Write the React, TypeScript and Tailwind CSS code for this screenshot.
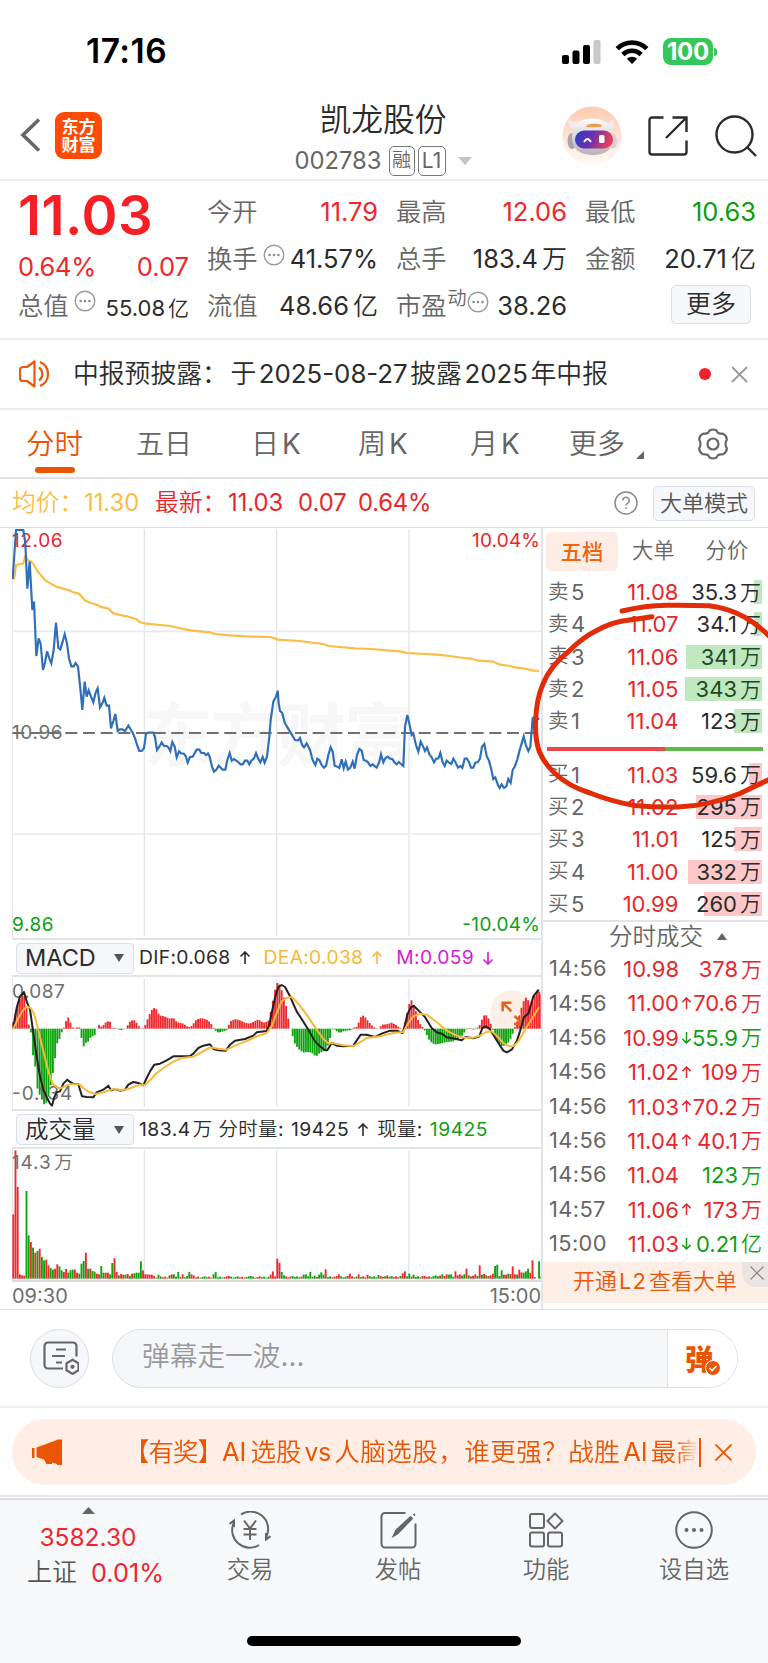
import React from "react";

type Pt = [number, number];

const PRICE: Pt[] = [[38,207],[48,60],[70,60],[76,100],[82,236],[89,155],[97,300],[102,275],[109,438],[116,385],[122,402],[129,480],[135,458],[141,424],[148,445],[154,460],[161,420],[168,338],[175,413],[181,418],[188,395],[194,373],[201,400],[207,445],[214,469],[221,469],[227,459],[234,470],[241,535],[247,600],[254,515],[260,560],[266,541],[273,560],[280,577],[287,548],[293,535],[300,592],[307,580],[313,563],[320,587],[327,587],[333,655],[340,633],[346,612],[353,663],[360,658],[367,658],[375,663],[385,647],[398,668],[405,685],[412,707],[418,723],[425,723],[432,715],[438,672],[445,668],[460,668],[465,682],[471,720],[478,710],[485,697],[492,708],[500,708],[505,712],[511,724],[517,696],[524,710],[530,742],[537,724],[543,730],[552,731],[558,740],[563,758],[570,741],[578,740],[590,719],[598,719],[604,729],[612,729],[618,735],[624,730],[629,740],[636,770],[642,785],[650,778],[656,767],[663,774],[668,779],[676,779],[682,750],[689,729],[695,752],[702,747],[712,754],[722,763],[728,763],[735,752],[742,752],[748,763],[754,752],[762,745],[768,729],[774,745],[781,757],[788,741],[794,758],[801,740],[808,680],[812,630],[820,575],[828,560],[833,542],[836,580],[840,603],[846,608],[855,640],[870,665],[885,690],[895,691],[900,684],[906,704],[912,712],[920,700],[930,720],[938,750],[946,765],[952,746],[958,750],[965,765],[972,773],[978,768],[985,735],[992,712],[998,725],[1004,767],[1012,770],[1018,774],[1025,748],[1031,775],[1037,755],[1044,779],[1051,773],[1058,755],[1064,776],[1071,735],[1078,717],[1085,722],[1091,750],[1098,752],[1104,757],[1111,768],[1118,763],[1125,769],[1130,773],[1137,758],[1143,733],[1150,757],[1156,745],[1163,740],[1170,746],[1177,747],[1183,757],[1190,763],[1196,756],[1203,762],[1210,768],[1215,650],[1222,615],[1229,645],[1235,675],[1240,670],[1248,705],[1255,725],[1262,695],[1268,707],[1275,723],[1281,712],[1288,733],[1295,742],[1302,757],[1308,747],[1315,745],[1321,729],[1328,757],[1334,768],[1340,752],[1346,757],[1354,762],[1360,746],[1366,756],[1374,773],[1381,768],[1387,774],[1394,746],[1400,745],[1407,756],[1413,773],[1420,773],[1426,758],[1433,757],[1440,746],[1446,710],[1453,702],[1460,738],[1467,752],[1473,775],[1480,807],[1486,802],[1493,823],[1499,834],[1505,823],[1512,834],[1519,829],[1525,807],[1532,818],[1538,780],[1545,768],[1552,748],[1558,724],[1565,700],[1571,679],[1578,707],[1585,723],[1591,710],[1598,625],[1605,620],[1618,628]];
const AVG: Pt[] = [[38,207],[43,205],[48,165],[70,160],[76,138],[83,150],[92,154],[100,162],[115,187],[137,212],[168,230],[205,240],[220,247],[235,250],[243,257],[253,270],[270,278],[295,286],[300,290],[325,296],[340,310],[365,316],[385,320],[410,328],[418,336],[432,340],[510,348],[570,361],[630,367],[645,372],[690,376],[740,379],[810,381],[822,384],[832,389],[900,393],[945,399],[970,402],[985,408],[1065,415],[1115,417],[1205,425],[1220,429],[1310,434],[1350,438],[1390,444],[1415,446],[1435,452],[1480,455],[1500,464],[1530,468],[1545,472],[1580,477],[1600,482],[1617,483]];
const DIF: Pt[] = [[40,292],[50,235],[60,200],[72,187],[80,215],[90,240],[100,310],[110,380],[120,440],[130,480],[140,502],[150,522],[156,528],[162,505],[170,488],[180,485],[190,462],[202,450],[210,457],[220,462],[235,463],[240,480],[246,500],[260,502],[280,503],[290,488],[310,480],[325,468],[333,482],[345,478],[360,483],[375,480],[385,465],[400,457],[415,460],[430,467],[440,445],[450,425],[463,405],[480,402],[500,392],[520,380],[540,380],[570,379],[580,372],[595,355],[610,348],[630,344],[640,358],[655,362],[678,363],[690,345],[705,333],[735,328],[760,318],[770,308],[800,304],[808,285],[815,250],[825,205],[835,172],[845,166],[855,172],[870,200],[890,245],[905,268],[925,300],[945,335],[960,350],[975,362],[982,362],[995,340],[1010,348],[1030,350],[1060,348],[1072,330],[1082,315],[1100,315],[1125,322],[1145,312],[1170,303],[1190,303],[1208,310],[1215,285],[1222,255],[1232,233],[1242,229],[1255,242],[1275,262],[1295,295],[1310,308],[1325,312],[1340,323],[1365,327],[1385,332],[1397,322],[1420,326],[1438,320],[1447,295],[1458,290],[1468,297],[1480,315],[1495,340],[1510,363],[1520,368],[1535,360],[1550,335],[1560,305],[1572,262],[1585,252],[1600,200],[1616,180]];
const DEA: Pt[] = [[40,297],[55,265],[70,240],[82,231],[92,235],[102,252],[115,300],[130,365],[145,425],[158,462],[170,472],[180,476],[195,470],[210,464],[238,464],[250,475],[265,486],[285,493],[305,490],[325,483],[345,477],[362,482],[385,478],[405,470],[420,465],[435,466],[450,452],[470,430],[490,415],[520,396],[545,385],[580,381],[600,370],[630,353],[655,357],[680,360],[700,350],[720,342],[745,332],[770,320],[800,310],[815,290],[830,250],[845,215],[858,205],[875,202],[895,222],[920,255],[950,300],[970,328],[985,341],[1000,341],[1030,347],[1060,349],[1085,335],[1100,325],[1140,320],[1180,310],[1210,307],[1225,280],[1240,260],[1260,252],[1280,255],[1310,277],[1340,303],[1370,318],[1390,324],[1420,324],[1440,318],[1458,307],[1475,305],[1490,318],[1510,340],[1525,349],[1540,350],[1555,335],[1575,300],[1595,268],[1617,233]];
const HIST: Pt[] = [[37,3],[40,20],[55,80],[70,108],[78,80],[85,15],[92,0],[97,-70],[105,-103],[112,-178],[120,-200],[133,-228],[143,-218],[153,-165],[163,-110],[170,-48],[180,-28],[187,-5],[193,5],[200,28],[204,36],[211,20],[217,5],[222,0],[230,4],[238,4],[242,-15],[250,-55],[258,-42],[266,-38],[270,-28],[284,-20],[292,3],[297,12],[303,5],[310,10],[320,22],[330,22],[335,3],[340,0],[345,4],[352,0],[360,-5],[368,-3],[375,0],[380,2],[386,18],[395,25],[403,25],[412,15],[418,4],[425,0],[432,2],[438,15],[445,35],[455,56],[462,62],[470,58],[478,40],[490,38],[510,30],[520,33],[530,20],[550,15],[565,4],[575,8],[590,28],[605,32],[620,27],[632,18],[640,3],[645,-5],[655,-12],[670,-8],[682,-4],[685,8],[692,22],[705,29],[720,25],[735,18],[750,15],[760,20],[775,28],[790,18],[805,22],[812,50],[820,90],[826,120],[834,143],[842,125],[850,100],[858,70],[864,35],[870,5],[875,-12],[885,-45],[895,-60],[910,-72],[920,-70],[935,-72],[948,-84],[960,-72],[970,-68],[980,-60],[988,-40],[995,-5],[1000,3],[1005,-5],[1020,-13],[1030,-8],[1045,-5],[1055,-4],[1060,3],[1072,5],[1080,30],[1087,41],[1095,35],[1105,22],[1115,10],[1125,2],[1138,0],[1145,12],[1160,13],[1175,18],[1190,10],[1200,2],[1210,0],[1215,20],[1222,50],[1232,90],[1240,75],[1248,52],[1256,20],[1265,8],[1272,0],[1277,-12],[1290,-38],[1305,-48],[1320,-45],[1340,-40],[1360,-38],[1375,-30],[1388,-20],[1398,-3],[1405,2],[1415,1],[1422,-4],[1430,0],[1440,12],[1450,38],[1457,43],[1466,30],[1475,8],[1481,-10],[1490,-38],[1505,-52],[1520,-50],[1535,-25],[1543,0],[1550,18],[1560,45],[1567,72],[1576,95],[1585,85],[1592,68],[1600,90],[1610,110],[1617,112],[1624,103]];
/* positive = rising minute, negative = falling minute */
const VOL_HEAD = [193,385,275,13,10,9,-263,-130,110,-93,78,-83,90,-65,-55,57,40,-32,-27,30,43,-37,-25,20,29,-18,-25,-27,27,18,-15,-45,-53,78,-30,30,-23,-21,15,13,-38,-18,18,18,-13,-47,61,20,-10,14,12,-12,14,-9,15,-16];
const VOL_SPIKES: Pt[] = [[408,-18],[415,-18],[421,-52],[428,25],[434,13],[441,13],[447,12],[454,12],[460,8],[475,-12],[510,-10],[518,13],[525,-13],[532,-20],[545,-9],[550,13],[559,-8],[566,-20],[572,13],[579,10],[638,-13],[645,-20],[685,8],[750,-8],[815,12],[822,22],[830,60],[836,48],[843,-20],[850,-10],[908,-12],[915,-13],[928,-10],[934,-20],[941,-9],[960,-12],[967,-19],[973,-12],[980,28],[1014,13],[1053,15],[1073,13],[1100,12],[1135,-11],[1160,10],[1200,-8],[1211,16],[1218,22],[1225,16],[1231,-15],[1238,-12],[1270,8],[1325,-13],[1338,13],[1344,-12],[1351,-13],[1364,22],[1377,13],[1390,-13],[1397,30],[1423,13],[1436,40],[1443,-15],[1449,-12],[1455,14],[1462,-10],[1482,15],[1488,-38],[1495,-42],[1502,-27],[1508,-25],[1515,12],[1521,12],[1528,-15],[1534,14],[1541,37],[1548,13],[1554,-12],[1561,27],[1567,19],[1574,-18],[1581,-22],[1587,-30],[1594,18],[1600,55],[1607,5],[1614,0],[1620,-52]];

const COUNT = 241;
const STEP = 6.6;

const FONT = "Inter, 'Noto Sans CJK SC DemiLight', 'Noto Sans CJK SC Light', 'Noto Sans CJK SC', sans-serif";
const BOLD_FONT = "'Noto Sans CJK SC', sans-serif";

function sample(points: Pt[], x: number) {
  for (let i = 1; i < points.length; i++) {
    const [x0, y0] = points[i - 1];
    const [x1, y1] = points[i];
    if (x <= x1) return y0 + ((y1 - y0) * (x - x0)) / (x1 - x0);
  }
  return points[points.length - 1][1];
}
const toPath = (points: Pt[]) => points.map(([x, y]) => `${x},${y}`).join(" ");

const volumes: number[] = Array.from({ length: COUNT }, (_, i) => {
  if (i < VOL_HEAD.length) return VOL_HEAD[i];
  const base = i > 190 ? 8 : i > 115 ? 6 : 5;
  const h = base + ((i * 7) % 5) - 2;
  return (i * 13) % 7 < 3 ? h : -h;
});
VOL_SPIKES.forEach(([x, h]) => {
  volumes[Math.min(COUNT - 1, Math.round((x - 40) / STEP))] = h;
});

const bars = Array.from({ length: COUNT }, (_, i) => i);

function Grid({ top, bottom }: { top: number; bottom: number }) {
  return (
    <g stroke="#e2e4ec" strokeWidth="4">
      {[433, 830, 1227].map((x) => (
        <line key={x} x1={x} x2={x} y1={top} y2={bottom} />
      ))}
    </g>
  );
}

function PriceChart() {
  return (
    <svg viewBox="36 54 1587 1230" className="block h-[410px] w-[529px] shrink-0" fontFamily={FONT}>
      <text x="430" y="754" fontSize="208" fontWeight="700" fill="#f7f7f8" textLength="810" fontFamily={BOLD_FONT}>东方财富</text>
      <Grid top={58} bottom={1278} />
      <g stroke="#e8eaf0" strokeWidth="5">
        <line x1="37" x2="1623" y1="364" y2="364" />
        <line x1="37" x2="1623" y1="972" y2="972" />
      </g>
      <line x1="37" x2="37" y1="54" y2="1284" stroke="#dfe1e8" strokeWidth="3" />
      <line x1="37" x2="1615" y1="669" y2="669" stroke="#707070" strokeWidth="6.5" strokeDasharray="36 17" />
      <g fontSize="57">
        <text x="36" y="110" fill="#e8262b" textLength="152">12.06</text>
        <text x="1620" y="110" fill="#e8262b" textAnchor="end" textLength="204">10.04%</text>
        <text x="36" y="688" fill="#6e6e6e" textLength="152">10.96</text>
        <text x="36" y="1262" fill="#109e14" textLength="125">9.86</text>
        <text x="1620" y="1262" fill="#109e14" textAnchor="end" textLength="233">-10.04%</text>
      </g>
      <polyline points={toPath(AVG)} fill="none" stroke="#f9be45" strokeWidth="6.500" strokeLinejoin="round" />
      <polyline points={toPath(PRICE)} fill="none" stroke="#2f6fba" strokeWidth="6.500" strokeLinejoin="miter" />
    </svg>
  );
}

function MacdChart() {
  return (
    <svg viewBox="36 142 1587 396" className="block h-[132px] w-[529px] shrink-0" fontFamily={FONT}>
      <Grid top={148} bottom={531} />
      <line x1="37" x2="37" y1="142" y2="538" stroke="#dfe1e8" strokeWidth="3" />
      <circle cx="1537" cy="248" r="66" fill="#fdeee6" />
      {bars.map((i) => {
        const h = sample(HIST, 40 + i * STEP);
        return <rect key={i} x={37 + i * STEP} y={h > 0 ? 297 - h : 297} width="5.7" height={Math.abs(h)} fill={h > 0 ? "#f02a2c" : "#0fa30f"} />;
      })}
      <g fontSize="57" fill="#6e6e6e">
        <text x="36" y="205" textLength="158">0.087</text>
        <text x="36" y="512" textLength="181">-0.134</text>
      </g>
      <g fill="none" stroke="#e8611a" strokeWidth="7.5">
        <path d="M1508 245V219h26M1508 219l26 26M1568 283h-26M1568 283v-28M1568 283l-24-24" />
      </g>
      <polyline points={toPath(DIF)} fill="none" stroke="#222" strokeWidth="6" strokeLinejoin="round" />
      <polyline points={toPath(DEA)} fill="none" stroke="#f9b938" strokeWidth="6" strokeLinejoin="round" />
    </svg>
  );
}

function VolumeChart() {
  return (
    <svg viewBox="36 656 1587 393" className="block h-[131px] w-[529px] shrink-0" fontFamily={FONT}>
      <Grid top={660} bottom={1045} />
      <line x1="37" x2="37" y1="656" y2="1049" stroke="#dfe1e8" strokeWidth="3" />
      {bars.map((i) => (
        <rect key={i} x={37 + i * STEP} y={1045 - Math.abs(volumes[i])} width="5.7" height={Math.abs(volumes[i])} fill={volumes[i] > 0 ? "#f02a2c" : "#0fa30f"} />
      ))}
      <text x="36" y="717" fontSize="57" fill="#6e6e6e" textLength="116">14.3</text>
      <text x="163" y="717" fontSize="56" fill="#6e6e6e">万</text>
    </svg>
  );
}

function Dots() {
  return (
    <svg viewBox="0 0 22 22" className="h-[22px] w-[22px] shrink-0">
      <circle cx="11" cy="11" r="9.8" fill="none" stroke="#9a9a9a" strokeWidth="1.4" />
      <g fill="#8a8a8a">
        <circle cx="6.6" cy="11" r="1.3" /><circle cx="11" cy="11" r="1.3" /><circle cx="15.4" cy="11" r="1.3" />
      </g>
    </svg>
  );
}

function Cell({ label, value, unit, color = "text-[#2b2b2b]", extra }: { label: string; value: string; unit?: string; color?: string; extra?: React.ReactNode }) {
  return (
    <div className="flex h-[47px] items-center">
      <span className="text-[25.3px] text-[#666]">{label}</span>
      {extra}
      <span className={`ml-auto flex items-center text-[25.5px] ${color}`}>
        {value}
        {unit && <span className="ml-[4px] text-[25px]">{unit}</span>}
      </span>
    </div>
  );
}

function StatusBar() {
  return (
    <div className="flex h-[85px] items-center pt-[18px] pl-[86px] pr-[51px]">
      <span className="pt-[1px] text-[33.500px] font-semibold tracking-[0.500px] text-black">17:16</span>
      <div className="ml-auto flex items-center">
        <svg viewBox="0 0 39 24" className="h-6 w-[39px]">
          <rect x="0" y="15" width="7" height="9" rx="2" /><rect x="10.5" y="10.5" width="7" height="13.5" rx="2" /><rect x="21" y="5" width="7" height="19" rx="2" /><rect x="31.500" y="0" width="7" height="24" rx="2" fill="#c8c8c8" />
        </svg>
        <svg viewBox="0 0 34 24" className="ml-[14px] h-6 w-[34px]">
          <g fill="none" stroke="#000" strokeWidth="4.6">
            <path d="M2.200 8.700C10.400.6 23.600.6 31.800 8.700" /><path d="M7.800 14.500C13.100 9.500 20.900 9.500 26.200 14.500" />
          </g>
          <path d="M11.800 18.800C14.900 16 19.100 16 22.200 18.800L17 24Z" />
        </svg>
        <span className="ml-[14px] flex h-[27px] w-[50px] items-center justify-center rounded-[8px] bg-[#34c759] text-[24px] font-bold tracking-[-0.2px] text-white">100</span>
        <span className="ml-[1px] h-2 w-[3px] rounded-r-full bg-[#34c759]" />
      </div>
    </div>
  );
}

function Robot() {
  return (
    <svg viewBox="0 0 60 60" className="h-[60px] w-[60px]">
      <defs>
        <linearGradient id="halo" x1="0" y1="0" x2="0" y2="1"><stop offset="0" stopColor="#fdcbb0" /><stop offset="1" stopColor="#fffaf7" /></linearGradient>
        <linearGradient id="visor" x1="0" y1="0" x2="1" y2="0.200"><stop offset="0" stopColor="#2b3fc4" /><stop offset="0.5" stopColor="#6a2fb0" /><stop offset="1" stopColor="#e8405c" /></linearGradient>
        <linearGradient id="shell" x1="0" y1="0" x2="0" y2="1"><stop offset="0" stopColor="#fdfcfc" /><stop offset="1" stopColor="#b9b1b7" /></linearGradient>
      </defs>
      <circle cx="30" cy="30" r="29.500" fill="url(#halo)" />
      <path d="M7 12c2 4 5 4 9 3l-4 8C7 21 5 16 7 12ZM50 13c-1 3-3 4-6 3l2 8c6-1 8-7 4-11Z" fill="#efebec" />
      <ellipse cx="10" cy="35" rx="4.500" ry="8" fill="#aaa3a9" /><ellipse cx="51" cy="35" rx="4" ry="7.500" fill="#d7d0d4" />
      <path d="M10 32C10 19 17 12.500 30 12.500S50 19 51 32c0 12-8 17-20 17S10 44 10 32Z" fill="url(#shell)" />
      <path d="M25 19q7-2.500 15 0l-1 2H24Z" fill="#f09a4c" />
      <rect x="13" y="24.500" width="38" height="18" rx="9" fill="url(#visor)" />
      <path d="M22 36q3.500-6 7 0" fill="none" stroke="#fff" strokeWidth="1.800" />
      <rect x="37" y="29" width="5.500" height="8" rx="1.500" fill="#fff" />
    </svg>
  );
}

function Header() {
  return (
    <header className="flex h-[96px] border-b-2 border-[#ebebed]">
      <div className="flex w-[228px] items-center pt-[6px] pl-5">
        <svg viewBox="0 0 22 36" className="h-9 w-[22px]"><path d="M19 2.500 3 18l16 15.500" fill="none" stroke="#666" strokeWidth="3.600" /></svg>
        <div className="ml-[13px] flex h-[47px] w-[47px] flex-col items-center justify-center rounded-[9px] bg-[#fd4a05] text-[17px] leading-[18.500px] font-bold text-white" style={{ fontFamily: BOLD_FONT }}>
          <span>东方</span><span>财富</span>
        </div>
      </div>
      <div className="flex w-[310px] flex-col items-center">
        <h1 className="mt-[19px] text-[31.800px] leading-[32px] text-[#2b2b2b]">凯龙股份</h1>
        <div className="mt-[9px] flex h-[31px] items-center">
          <span className="text-[23.800px] text-[#666]">002783</span>
          <span className="ml-[7px] flex h-[30px] w-[26px] items-center justify-center rounded-[5px] border-[1.500px] border-[#777] text-[19px] text-[#666]">融</span>
          <span className="ml-[3px] flex h-[30px] w-[28px] items-center justify-center rounded-[5px] border-[1.500px] border-[#777] text-[21px] text-[#666]">L1</span>
          <svg viewBox="0 0 14 8" className="ml-[12px] h-2 w-[14px]"><path d="M0 0h14L7 8Z" fill="#c4c4c4" /></svg>
        </div>
      </div>
      <div className="flex flex-1 items-center pt-[7px] pl-[24px]">
        <Robot />
        <svg viewBox="0 0 40 40" className="ml-[26px] h-10 w-10" fill="none" stroke="#2b2b2b" strokeWidth="2.400">
          <path d="M15.500 1.500H4A2.500 2.500 0 0 0 1.500 4v32A2.500 2.500 0 0 0 4 38.500h32a2.500 2.500 0 0 0 2.500-2.500V24.500M24.500 1.500h14V16M38.500 1.500 18 22" />
        </svg>
        <svg viewBox="0 0 42 42" className="ml-[27px] h-[42px] w-[42px]" fill="none" stroke="#2b2b2b" strokeWidth="2.400">
          <circle cx="19.500" cy="19.500" r="18" /><path d="m32 32 9 9" />
        </svg>
      </div>
    </header>
  );
}

function Quote() {
  const red = "text-[#f0262b]";
  return (
    <section className="grid h-[159px] grid-cols-[171px_171px_171px_171px] gap-x-[18px] border-b-2 border-[#ebebed] pt-[7.500px] pl-[18px]">
      <div className={red}>
        <div className="flex h-[53px] items-center pt-[1px] text-[54.500px] font-semibold tracking-[0.500px] text-[#f81f24]">11.03</div>
        <div className="flex h-[51px] items-center justify-between text-[25.500px]"><span className="tracking-[-0.300px]">0.64%</span><span>0.07</span></div>
        <div className="flex h-[26px] items-center text-[25.300px] text-[#666]">
          总值
          <span className="mb-[9px] ml-[5px] flex"><Dots /></span>
          <span className="mt-[5px] ml-auto flex items-center text-[22px] text-[#2b2b2b]">55.08<span className="ml-[3px] text-[21px]">亿</span></span>
        </div>
      </div>
      <div>
        <Cell label="今开" value="11.79" color={red} />
        <Cell label="换手" value="41.57%" extra={<span className="mb-[9px] ml-[5px] flex"><Dots /></span>} />
        <Cell label="流值" value="48.66" unit="亿" />
      </div>
      <div>
        <Cell label="最高" value="12.06" color={red} />
        <Cell label="总手" value="183.4" unit="万" />
        <Cell label="市盈" value="38.26" extra={<><span className="mb-[15px] ml-[1px] text-[19px] text-[#666]">动</span><span className="mb-[9px] flex"><Dots /></span></>} />
      </div>
      <div>
        <Cell label="最低" value="10.63" color="text-[#0c9c0c]" />
        <Cell label="金额" value="20.71" unit="亿" />
        <div className="mt-[2px] ml-[86px] flex h-[39px] w-[80px] items-center justify-center rounded-[5px] border-[1.500px] border-[#dcdee5] bg-[#f6f7fa] pt-[1px] text-[25px] text-[#2b2b2b]">更多</div>
      </div>
    </section>
  );
}

function News() {
  return (
    <section className="flex h-[70px] items-center border-b-2 border-[#ebebed] pl-[19px]">
      <svg viewBox="0 0 34 28" className="h-7 w-[34px]" fill="none" stroke="#e8590c" strokeWidth="2.200">
        <path d="M15.500 1.500v25L8 21H4a3 3 0 0 1-3-3v-8a3 3 0 0 1 3-3h4ZM20 7.500a8 8 0 0 1 0 13M21 2a13 13 0 0 1 0 24" strokeLinejoin="round" />
      </svg>
      <div className="ml-[20px] flex w-[535px] justify-between whitespace-nowrap text-[25.800px] text-[#2b2b2b]">
        <span>中报预披露：</span><span>于</span><span>2025-08-27</span><span>披露</span><span>2025</span><span>年中报</span>
      </div>
      <span className="ml-[91px] h-3 w-3 rounded-full bg-[#f5222d]" />
      <svg viewBox="0 0 17 17" className="ml-[20px] h-[17px] w-[17px]"><path d="m1 1 15 15M16 1 1 16" stroke="#999" strokeWidth="1.800" /></svg>
    </section>
  );
}

function Tabs() {
  return (
    <nav className="flex h-[69px] items-center border-b-2 border-[#dfe1e8] text-[28px] whitespace-nowrap text-[#666]">
      <div className="flex h-full w-[136px] flex-col pl-[26px]">
        <span className="mt-[18px] h-[32px] text-[28.500px] font-medium leading-[32px] text-[#ea5504]">分时</span>
        <span className="mt-[7px] ml-[9px] h-[6px] w-[40px] rounded-[3px] bg-[#ea5504]" />
      </div>
      <span className="w-[115px]">五日</span>
      <span className="flex w-[107px] gap-[3px]"><span>日</span><span>K</span></span>
      <span className="flex w-[112px] gap-[3px]"><span>周</span><span>K</span></span>
      <span className="flex w-[99px] gap-[3px]"><span>月</span><span>K</span></span>
      <span>更多</span>
      <svg viewBox="0 0 8 8" className="mt-[22px] ml-[11px] h-2 w-2"><path d="M8 0v8H0Z" fill="#666" /></svg>
      <svg viewBox="0 0 32 32" className="ml-[53px] h-8 w-8" fill="none" stroke="#666" strokeWidth="2.200">
        <path d="M12.600 2.500q3.400-2 6.800 0l1.500 2.300q1.300.8 2.800.8l2.700.3q3.300 1.900 3.400 5.600l-1 2.700q-.5 1.800 0 3.600l1 2.700q-.1 3.700-3.400 5.600l-2.700.3q-1.500 0-2.800.8l-1.500 2.300q-3.400 2-6.800 0l-1.500-2.300q-1.300-.8-2.800-.8l-2.700-.3q-3.300-1.900-3.400-5.600l1-2.700q.5-1.800 0-3.600l-1-2.700q.1-3.700 3.400-5.600l2.700-.3q1.500 0 2.800-.8Z" />
        <circle cx="16" cy="16" r="5.500" />
      </svg>
    </nav>
  );
}

function InfoRow() {
  return (
    <div className="flex h-[48px] items-center pl-[12px] text-[23.800px] whitespace-nowrap text-[#e8262b]">
      <span className="w-[72px] text-[#f9be45]">均价：</span>
      <span className="w-[71px] text-[#f9be45]">11.30</span>
      <span className="w-[73px]">最新：</span>
      <span className="w-[70px]">11.03</span>
      <span className="w-[60px]">0.07</span>
      <span className="w-[256px] tracking-[-0.200px]">0.64%</span>
      <svg viewBox="0 0 24 24" className="h-6 w-6" fill="none" stroke="#8a8a8a" strokeWidth="1.500"><circle cx="12" cy="12" r="11" /><path d="M8.800 9.500a3.200 3.200 0 1 1 4.600 2.900q-1.400.7-1.400 2.100M12 16.200v1.800" /></svg>
      <span className="ml-[15px] flex h-[35px] w-[102px] items-center justify-center rounded-[5px] border-[1.500px] border-[#dcdee5] bg-[#f6f7fa] text-[22px] text-[#555]">大单模式</span>
    </div>
  );
}

const book = [
  { n: "卖", k: "5", p: "11.08", v: "35.3", w: 8 },
  { n: "卖", k: "4", p: "11.07", v: "34.1", w: 8 },
  { n: "卖", k: "3", p: "11.06", v: "341", w: 76 },
  { n: "卖", k: "2", p: "11.05", v: "343", w: 77 },
  { n: "卖", k: "1", p: "11.04", v: "123", w: 28 },
  { n: "买", k: "1", p: "11.03", v: "59.6", w: 13 },
  { n: "买", k: "2", p: "11.02", v: "295", w: 66 },
  { n: "买", k: "3", p: "11.01", v: "125", w: 28 },
  { n: "买", k: "4", p: "11.00", v: "332", w: 74 },
  { n: "买", k: "5", p: "10.99", v: "260", w: 58 },
];

const trades = [
  { t: "14:56", p: "10.98", a: "", v: "378", u: "万", up: true },
  { t: "14:56", p: "11.00", a: "↑", v: "70.6", u: "万", up: true },
  { t: "14:56", p: "10.99", a: "↓", v: "55.9", u: "万", up: false },
  { t: "14:56", p: "11.02", a: "↑", v: "109", u: "万", up: true },
  { t: "14:56", p: "11.03", a: "↑", v: "70.2", u: "万", up: true },
  { t: "14:56", p: "11.04", a: "↑", v: "40.1", u: "万", up: true },
  { t: "14:56", p: "11.04", a: "", v: "123", u: "万", up: false },
  { t: "14:57", p: "11.06", a: "↑", v: "173", u: "万", up: true },
  { t: "15:00", p: "11.03", a: "↓", v: "0.21", u: "亿", up: false },
];

function Arrow({ down, className }: { down?: boolean; className: string }) {
  return (
    <svg viewBox="0 0 12 14" className={className} fill="none" stroke="currentColor" strokeWidth="1.600">
      <path d={down ? "M6 1v12M1.500 8.500 6 13l4.500-4.500" : "M6 13V1M1.500 5.500 6 1l4.500 4.500"} />
    </svg>
  );
}

function BookRow({ r }: { r: (typeof book)[number] }) {
  const tint = r.n === "卖" ? "bg-[#bfe8c1]" : "bg-[#fdc8ca]";
  const ink = r.n === "卖" && r.w > 70 ? "text-[#1d4a1f]" : "text-[#2b2b2b]";
  return (
    <div className="flex h-[32.300px] shrink-0 items-center pr-[6px] pl-[5px] text-[22px] whitespace-nowrap">
      <span className="w-[23px] text-[20.500px] text-[#666]">{r.n}</span>
      <span className="w-[20px] text-[#666]">{r.k}</span>
      <span className="w-[88px] text-right text-[#e8262b]">{r.p}</span>
      <div className="relative ml-auto flex h-6 w-[84px] items-center justify-end">
        <span className={`absolute inset-y-0 right-0 ${tint}`} style={{ width: r.w }} />
        <span className={`relative flex items-center pr-[1px] ${ink}`}>{r.v}<span className="ml-[3px] text-[21px]">万</span></span>
      </div>
    </div>
  );
}

function Sidebar() {
  return (
    <aside className="flex w-[227px] flex-col border-l-2 border-[#e2e4ea]">
      <div className="flex h-[48px] shrink-0 items-center pb-[2px] pl-[3px] text-[21.300px] text-[#666]">
        <span className="flex h-[39px] w-[72px] items-center justify-center rounded-[6px] bg-[#feede4] text-[#f0630f] font-medium" style={{ fontFamily: BOLD_FONT }}>五档</span>
        <span className="ml-[14px]">大单</span>
        <span className="ml-[31px]">分价</span>
      </div>
      {book.slice(0, 5).map((r) => <BookRow key={r.n + r.k} r={r} />)}
      <div className="mt-[9.500px] mb-[7.500px] ml-[4px] flex h-[4px] w-[216px] shrink-0">
        <span className="w-[118px] bg-[#ee4747]" /><span className="flex-1 bg-[#5cba48]" />
      </div>
      {book.slice(5).map((r) => <BookRow key={r.n + r.k} r={r} />)}
      <div className="flex h-[32px] shrink-0 items-center border-t-2 border-[#e2e4ea] pl-[66px] text-[23.500px] text-[#666]">
        分时成交
        <svg viewBox="0 0 10 7" className="ml-[14px] h-[7px] w-[10px]"><path d="M0 7h10L5 0Z" fill="#666" /></svg>
      </div>
      {trades.map((r, i) => (
        <div key={i} className="flex h-[34.350px] shrink-0 items-center pr-[6px] pl-[6px] text-[22px] whitespace-nowrap">
          <span className="w-[60px] text-[21.800px] tracking-[0.400px] text-[#666]">{r.t}</span>
          <span className="w-[70px] text-right text-[#e8262b]">{r.p}</span>
          <span className={`ml-[2px] flex ${r.a === "↓" ? "text-[#109e14]" : "text-[#e8262b]"}`}>{r.a && <Arrow down={r.a === "↓"} className="h-[13px] w-[11px]" />}</span>
          <span className={`ml-auto flex items-center ${r.up ? "text-[#e8262b]" : "text-[#109e14]"}`}>{r.v}<span className="ml-[3px] text-[21px]">{r.u}</span></span>
        </div>
      ))}
      <div className="mt-[1px] flex h-[41px] shrink-0 bg-[#fdeee6]">
        <span className="flex flex-1 items-center pb-[3px] pl-[30px] text-[22px] whitespace-nowrap text-[#e8590c]">开通<span className="mx-[2px] tracking-[1px]">L2</span>查看大单</span>
        <span className="flex h-[25px] w-[26px] items-center justify-center rounded-bl-[14px] bg-[#ebe4e2]">
          <svg viewBox="0 0 14 14" className="-mt-1 ml-1 h-[14px] w-[14px]"><path d="m.5.500 13 13M13.500.500l-13 13" stroke="#888" strokeWidth="1.200" /></svg>
        </span>
      </div>
    </aside>
  );
}

function Picker({ children }: { children: string }) {
  return (
    <span className="flex h-[31px] w-[118px] items-center justify-between rounded-[4px] border-[1.500px] border-[#dcdee5] bg-[#f6f7fa] pr-[9px] pl-[8px] text-[23.500px] tracking-normal text-[#2b2b2b]">
      {children}
      <svg viewBox="0 0 10 8" className="h-2 w-[10px]"><path d="M0 0h10L5 8Z" fill="#555" /></svg>
    </span>
  );
}

function Charts() {
  return (
    <div className="flex w-[541px] flex-col pl-[12px] text-[19.300px] whitespace-nowrap text-[#2b2b2b]">
      <PriceChart />
      <div className="flex h-[39px] shrink-0 items-center border-y-2 border-[#e2e4ea] pt-[1px] pl-[4px] tracking-[0.300px]">
        <Picker>MACD</Picker>
        <span className="ml-[5px]">DIF:0.068</span><Arrow className="ml-[8px] h-[14px] w-[12px]" />
        <span className="ml-[13px] flex items-center text-[#f9b938]">DEA:0.038<Arrow className="ml-[8px] h-[14px] w-[12px]" /></span>
        <span className="ml-[13px] flex items-center text-[#d51bd8]">M:0.059<Arrow down className="ml-[8px] h-[14px] w-[12px]" /></span>
      </div>
      <MacdChart />
      <div className="flex h-[40px] shrink-0 items-center border-y-2 border-[#e2e4ea] pt-[1px] pl-[4px] tracking-[0.500px]">
        <Picker>成交量</Picker>
        <span className="ml-[5px]">183.4</span><span className="ml-[2px]">万</span>
        <span className="ml-[6px]">分时量:</span><span className="ml-[7px]">19425</span><Arrow className="ml-[8px] h-[14px] w-[12px]" />
        <span className="ml-[8px]">现量:</span><span className="ml-[7px] text-[#109e14]">19425</span>
      </div>
      <VolumeChart />
      <div className="flex h-[29px] shrink-0 items-center justify-between border-t-2 border-[#d9dbe2] text-[20px] text-[#6e6e6e]">
        <span>09:30</span><span>15:00</span>
      </div>
    </div>
  );
}

function CommentBar() {
  return (
    <div className="flex h-[98px] items-center border-b-2 border-[#f0f0f2] pl-[30px]">
      <span className="flex h-[59px] w-[59px] items-center justify-center rounded-full border-[1.500px] border-[#dcdee5] bg-[#f6f7fa]">
        <svg viewBox="0 0 36 34" className="ml-[2px] h-[34px] w-9" fill="none" stroke="#666" strokeWidth="2.200">
          <path d="M20 27.500H5A3.500 3.500 0 0 1 1.500 24V5A3.500 3.500 0 0 1 5 1.500h25A3.500 3.500 0 0 1 33.500 5v10.500M13 8.500h10M9 15h13M13 21.500h6" />
          <path d="m29.500 18.800 6 3.500v7l-6 3.600-6-3.600v-7Z" /><circle cx="29.500" cy="25.800" r="1" />
        </svg>
      </span>
      <div className="ml-[23px] flex h-[59px] w-[626px] overflow-hidden rounded-full border-[1.500px] border-[#dcdee5] bg-[#f6f7fa]">
        <span className="flex-1 pt-[11px] pl-[29px] text-[27.700px] leading-[30px] text-[#999]">弹幕走一波...</span>
        <span className="flex w-[70px] items-center border-l-[1.500px] border-[#dcdee5] bg-white pl-[17px]">
          <span className="relative text-[28.500px] leading-[30px] font-black text-[#ea5504]" style={{ fontFamily: BOLD_FONT }}>
            弹
            <svg viewBox="0 0 16 16" className="absolute -right-[7px] -bottom-[3px] h-4 w-4"><circle cx="8" cy="8" r="7.500" fill="#ea5504" stroke="#fff" /><path d="m4.500 8 2.500 2.500L11.500 6" fill="none" stroke="#fff" strokeWidth="1.600" /></svg>
          </span>
        </span>
      </div>
    </div>
  );
}

function Promo() {
  return (
    <div className="flex h-[89px] border-b-2 border-[#e9e9eb] px-[12px] pt-[11px]">
      <div className="flex h-[66px] w-full items-center rounded-full bg-[#feeee6] pl-[20px] text-[#ea5504]">
        <svg viewBox="0 0 30 27" className="h-[27px] w-[30px]" fill="currentColor"><path d="M0 9h2.500v10H0ZM4.500 8.500 25 1V.5h5V26h-5v-1l-5-1.500V25h-6v-1l-2-3.500-7.500-2.500Z" /></svg>
        <div className="ml-[62px] flex w-[575px] overflow-hidden text-[25.500px] leading-[40px] whitespace-nowrap [mask-image:linear-gradient(to_right,#000_96%,transparent)]">
          <span className="tracking-[-1px]">【有奖】</span><span>AI</span><span className="ml-[4px]">选股</span><span className="mr-[3px] ml-[3px] text-[24.500px]">vs</span><span className="tracking-[0.500px]">人脑选股，谁更强？战胜</span><span className="mx-[3px]">AI</span><span>最高</span>
        </div>
        <span className="h-[29px] w-[1.500px] bg-[#ea5504]" />
        <svg viewBox="0 0 17 17" className="ml-[14px] h-[17px] w-[17px]"><path d="m.5.500 16 16M16.500.500l-16 16" stroke="#ea5504" strokeWidth="1.800" /></svg>
      </div>
    </div>
  );
}

const icon = "h-[38px] w-[42px]";
const nav = [
  { label: "交易", art: (
    <svg viewBox="0 0 42 38" className={icon} fill="none" stroke="#666" strokeWidth="2">
      <path d="M12 3.500A17.500 17.500 0 0 1 37.500 25.500l-.5 3M41.500 25l-4.500 3.500V22M30 34A17.500 17.500 0 0 1 4.500 12.500L5 9.500M.5 13 5 9.500V16" />
      <path d="m15 9.500 6 8 6-8M21 17.500v11.500M14.500 18h13M14.500 23.500h13" />
    </svg>) },
  { label: "发帖", art: (
    <svg viewBox="0 0 42 38" className={icon} fill="none" stroke="#666" strokeWidth="2">
      <path d="M28.500 2H8A3.500 3.500 0 0 0 4.500 5.500v27.500A3.500 3.500 0 0 0 8 36.500h27a3.500 3.500 0 0 0 3.500-3.500V12.500" />
      <path d="M16.500 25 19 19.500 33.500 6l1.500 1.500L20.500 22.500ZM36.500 3l1.500 1.500" strokeWidth="1.800" fill="#666" />
    </svg>) },
  { label: "功能", art: (
    <svg viewBox="0 0 42 38" className={icon} fill="none" stroke="#666" strokeWidth="2">
      <rect x="5" y="3" width="14" height="14" rx="2" /><rect x="5" y="21.500" width="14" height="14" rx="2" /><rect x="23" y="21.500" width="14" height="14" rx="2" /><path d="m30 2.500 7.500 7.500L30 17.500 22.500 10Z" strokeLinejoin="round" />
    </svg>) },
  { label: "设自选", art: (
    <svg viewBox="0 0 42 38" className={icon} fill="none" stroke="#666" strokeWidth="2">
      <circle cx="21" cy="19" r="17.800" /><g fill="#666" stroke="none"><circle cx="13.500" cy="19" r="2" /><circle cx="21" cy="19" r="2" /><circle cx="28.500" cy="19" r="2" /></g>
    </svg>) },
];

function BottomNav() {
  return (
    <footer className="mt-[1px] flex h-[167px] flex-col border-t-2 border-[#dddfe4] bg-[#f7f8fa]">
      <div className="flex h-[136px]">
        <div className="flex w-[176px] flex-col items-center text-[24.500px] text-[#f0262b]">
          <svg viewBox="0 0 13 7" className="mt-[7px] h-[7px] w-[13px]"><path d="M0 7h13L6.500 0Z" fill="#666" /></svg>
          <span className="mt-[11px] h-[24px]">3582.30</span>
          <span className="mt-[11px] flex h-[25px] items-center gap-[14px] pl-[15px]"><span className="text-[25px] text-[#555]">上证</span><span className="text-[25.300px]">0.01%</span></span>
        </div>
        {nav.map((n) => (
          <div key={n.label} className="flex w-[148px] flex-col items-center pt-[11px] text-[23.300px] text-[#666]">
            {n.art}
            <span className="mt-[9px]">{n.label}</span>
          </div>
        ))}
      </div>
      <span className="mx-auto h-[10px] w-[274px] rounded-full bg-black" />
    </footer>
  );
}

export default function App() {
  return (
    <div className="relative h-[1663px] w-[768px] overflow-hidden bg-white leading-none" style={{ fontFamily: FONT }}>
      <StatusBar />
      <Header />
      <Quote />
      <News />
      <Tabs />
      <InfoRow />
      <div className="flex h-[783px] border-y border-[#dddfe6]">
        <Charts />
        <Sidebar />
      </div>
      <CommentBar />
      <Promo />
      <BottomNav />
      <svg viewBox="0 0 240 210" className="pointer-events-none absolute top-[600px] left-[528px] h-[210px] w-[240px]" fill="none" stroke="#e22c08" strokeWidth="5" strokeLinecap="round" strokeLinejoin="round">
        <path d="M94 11Q117 5.500 139 5.200T181 5.800Q216 10 242 37" />
        <path d="M124 16.700 93 21.200Q80 24 70 29.800Q55 37 40.300 51.700Q22 66 15 84Q8.500 98 7.500 122Q7 140 11.500 152Q16 163 27 173.500Q40 186 62 193Q85 202 107 205.500Q127 207.500 150 207Q180 206 212 193.500L242 179" />
      </svg>
    </div>
  );
}
